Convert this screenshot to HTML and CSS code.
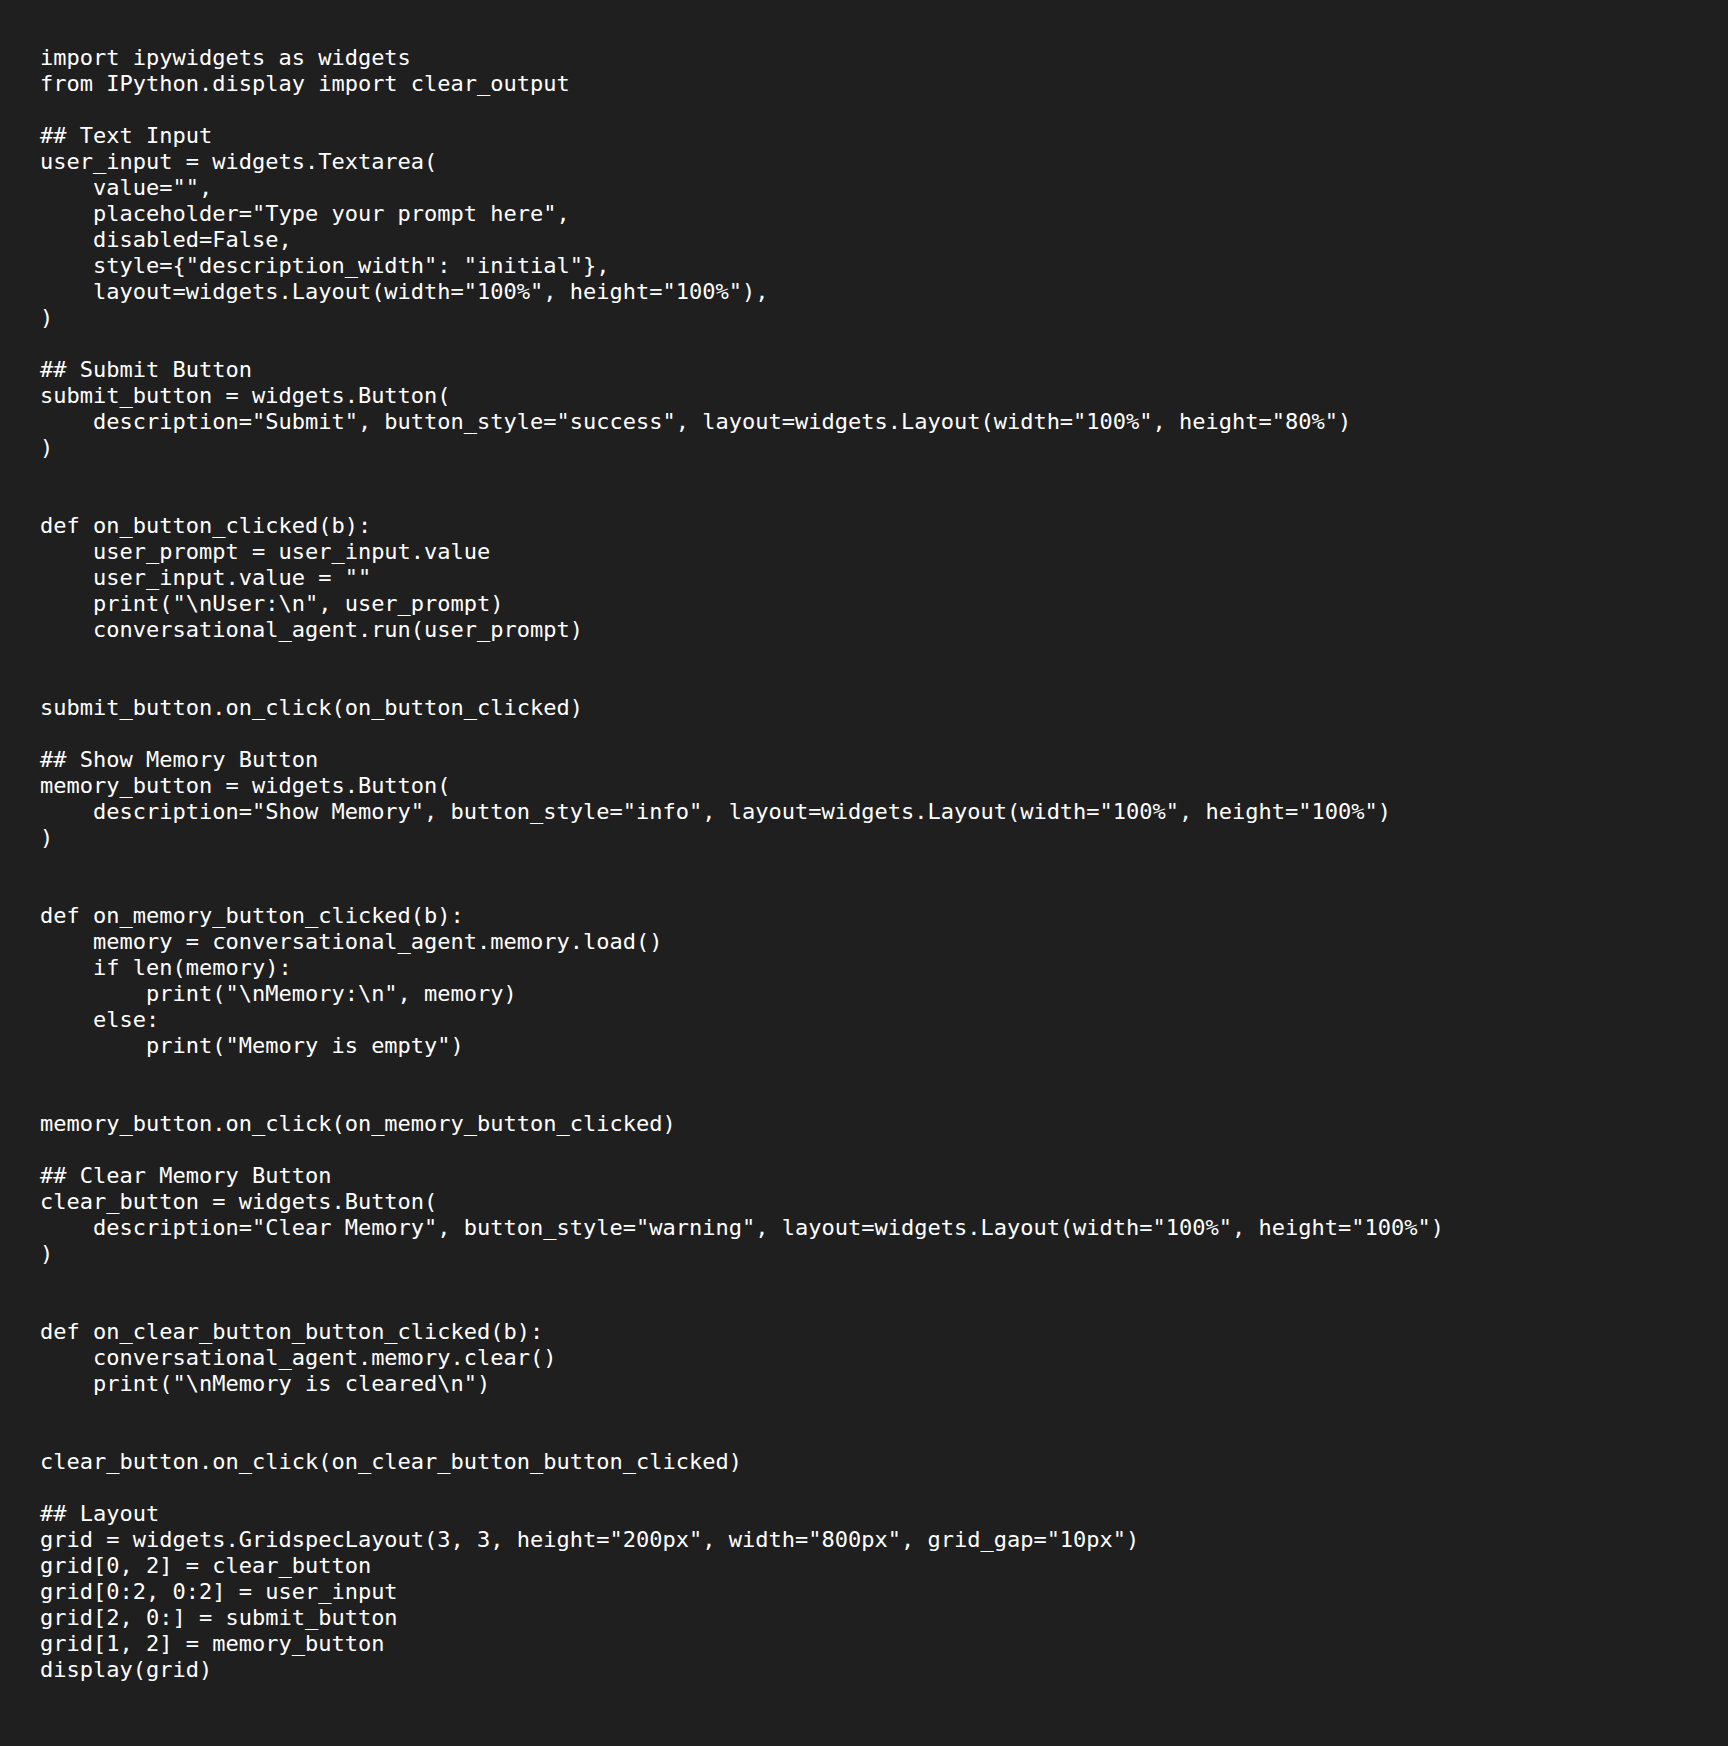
FILE: index.html
```html
<!DOCTYPE html>
<html>
<head>
<meta charset="utf-8">
<link rel="stylesheet" href="styles.css">
</head>
<body>
<main class="page">
<pre class="code">import ipywidgets as widgets
from IPython.display import clear_output

## Text Input
user_input = widgets.Textarea(
    value="",
    placeholder="Type your prompt here",
    disabled=False,
    style={"description_width": "initial"},
    layout=widgets.Layout(width="100%", height="100%"),
)

## Submit Button
submit_button = widgets.Button(
    description="Submit", button_style="success", layout=widgets.Layout(width="100%", height="80%")
)


def on_button_clicked(b):
    user_prompt = user_input.value
    user_input.value = ""
    print("\nUser:\n", user_prompt)
    conversational_agent.run(user_prompt)


submit_button.on_click(on_button_clicked)

## Show Memory Button
memory_button = widgets.Button(
    description="Show Memory", button_style="info", layout=widgets.Layout(width="100%", height="100%")
)


def on_memory_button_clicked(b):
    memory = conversational_agent.memory.load()
    if len(memory):
        print("\nMemory:\n", memory)
    else:
        print("Memory is empty")


memory_button.on_click(on_memory_button_clicked)

## Clear Memory Button
clear_button = widgets.Button(
    description="Clear Memory", button_style="warning", layout=widgets.Layout(width="100%", height="100%")
)


def on_clear_button_button_clicked(b):
    conversational_agent.memory.clear()
    print("\nMemory is cleared\n")


clear_button.on_click(on_clear_button_button_clicked)

## Layout
grid = widgets.GridspecLayout(3, 3, height="200px", width="800px", grid_gap="10px")
grid[0, 2] = clear_button
grid[0:2, 0:2] = user_input
grid[2, 0:] = submit_button
grid[1, 2] = memory_button
display(grid)</pre>
</main>
</body>
</html>
```

FILE: styles.css
```css
html, body {
  margin: 0;
  padding: 0;
  background: #1f1f1f;
}
.page {
  min-height: 1746px;
  box-sizing: border-box;
  padding: 45px 40px;
}
.code {
  margin: 0;
  font-family: "DejaVu Sans Mono", "Liberation Mono", monospace;
  font-size: 22px;
  line-height: 26px;
  color: #ffffff;
  white-space: pre;
}
```
